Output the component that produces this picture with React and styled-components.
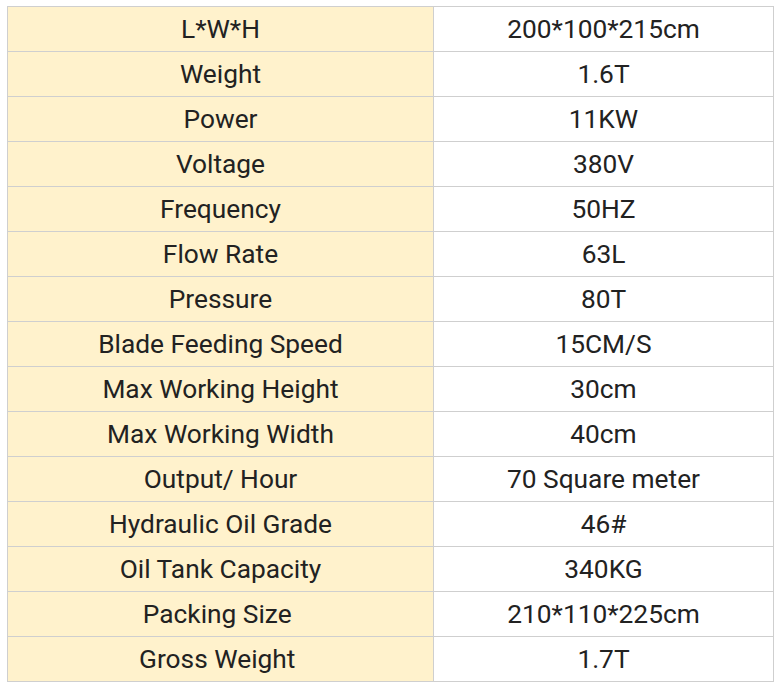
import React from "react";
import styled, { createGlobalStyle } from "styled-components";

const Global = createGlobalStyle`
  html, body { margin: 0; padding: 0; background: #fff; }
  body { font-family: Roboto, "Liberation Sans", sans-serif; }
`;

const Wrap = styled.div`
  padding: 6px 7px;
`;

const Table = styled.table`
  width: 766px;
  border-collapse: collapse;
  table-layout: fixed;
  font-family: Roboto, "Liberation Sans", sans-serif;
  font-size: 26.3px;
  color: #222;
`;

const Cell = styled.td`
  height: 44px;
  padding: 0;
  border: 1px solid #cfcfcf;
  text-align: center;
  vertical-align: middle;
  background: ${(p) => (p.$label ? "#fff2cc" : "#ffffff")};
  line-height: 1;
  white-space: pre;
`;

const rows = [
  ["L*W*H", "200*100*215cm"],
  ["Weight", "1.6T"],
  ["Power", "11KW"],
  ["Voltage", "380V"],
  ["Frequency", "50HZ"],
  ["Flow Rate", "63L"],
  ["Pressure", "80T"],
  ["Blade Feeding Speed", "15CM/S"],
  ["Max Working Height", "30cm"],
  ["Max Working Width", "40cm"],
  ["Output/ Hour", "70 Square meter"],
  ["Hydraulic Oil Grade", "46#"],
  ["Oil Tank Capacity", "340KG"],
  ["Packing Size ", "210*110*225cm"],
  ["Gross Weight ", "1.7T"],
];

export default function App() {
  return (
    <>
      <Global />
      <Wrap>
        <Table>
          <colgroup>
            <col style={{ width: 426 }} />
            <col style={{ width: 340 }} />
          </colgroup>
          <tbody>
            {rows.map(([k, v]) => (
              <tr key={k}>
                <Cell $label>{k}</Cell>
                <Cell>{v}</Cell>
              </tr>
            ))}
          </tbody>
        </Table>
      </Wrap>
    </>
  );
}
